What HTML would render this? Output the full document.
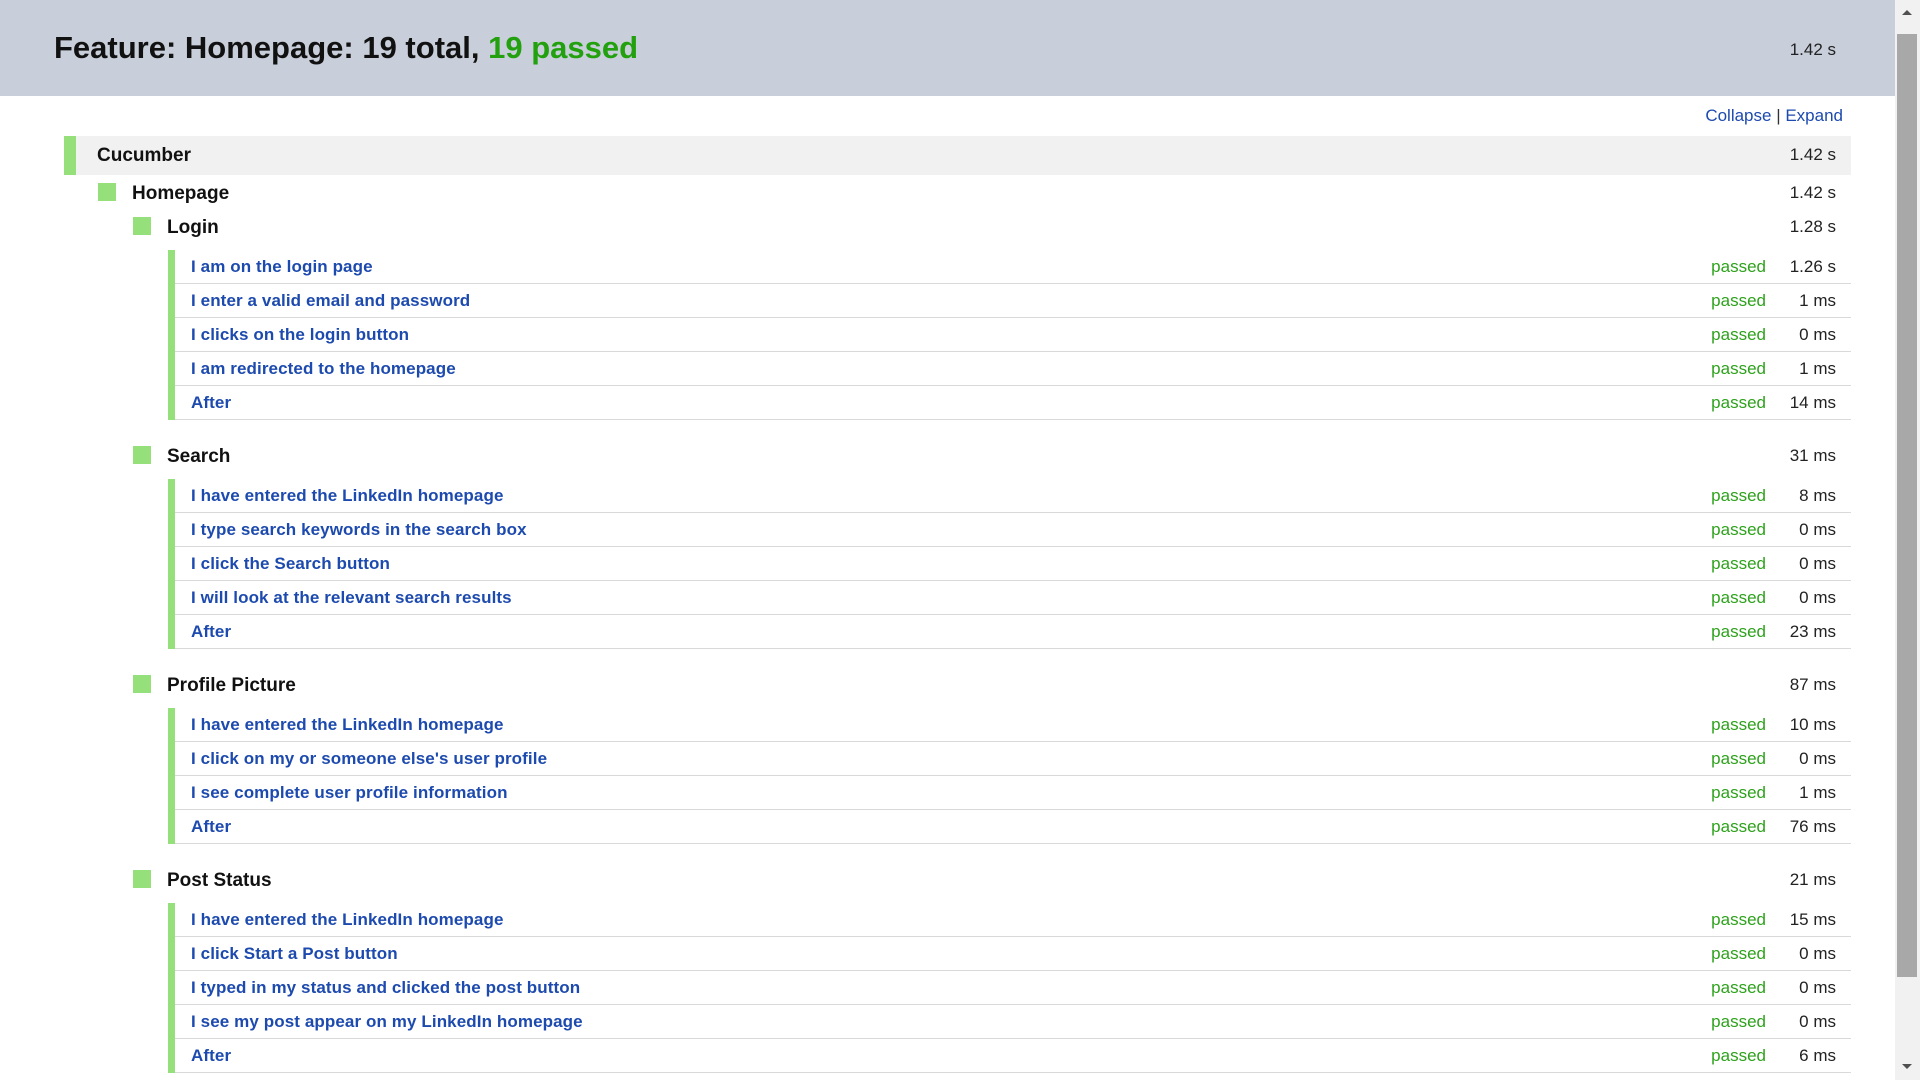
<!DOCTYPE html>
<html><head><meta charset="utf-8">
<style>
*{margin:0;padding:0;box-sizing:border-box}
body{width:1920px;height:1080px;overflow:hidden;background:#fff;font-family:"Liberation Sans",Arial,sans-serif;position:relative}
.hdr{position:absolute;left:0;top:0;width:1895px;height:96px;background:#c8ceda}
.hdr h1{position:absolute;left:54px;top:30px;font-size:31px;font-weight:bold;color:#111;white-space:nowrap}
.hdr h1 span{color:#22a00e}
.hdr .t{position:absolute;right:59px;top:40px;font-size:17px;color:#222}
.links{position:absolute;right:77px;top:106px;font-size:17px;color:#1d4aae}
.links i{font-style:normal;color:#333}
.wrap{position:absolute;left:64px;top:136px;width:1787px}
.cuc{height:39px;background:#f1f1f1;border-left:12px solid #95e07a;position:relative}
.cuc b{position:absolute;left:21px;top:9px;font-size:19px;color:#111}
.tm{position:absolute;right:15px;font-size:17px;color:#222}
.cuc .tm{top:9px}
.row{height:34px;position:relative}
.sq{position:absolute;width:18px;height:18px;background:#95e07a;top:8px}
.row b{position:absolute;top:8px;font-size:19px;color:#111}
.row .tm{top:8px}
.feat .sq{left:34px}.feat b{left:68px}
.sc{margin-top:18px}
.sc .sq{left:69px}.sc b{left:103px}
.steps{margin-left:104px;margin-top:7px;border-left:7px solid #95e07a}
.st{height:34px;border-bottom:1px solid #d9d9d9;position:relative}
.st a{position:absolute;left:16px;top:7px;font-size:17px;font-weight:bold;color:#1d4aae;text-decoration:none;letter-spacing:.1px}
.st .p{position:absolute;right:85px;top:7px;font-size:17px;color:#2ea21c}
.st .tm{top:7px}
.sb{position:absolute;left:1895px;top:0;width:25px;height:1080px;background:#f1f1f1}
.th{position:absolute;left:2px;top:34px;width:20px;height:943px;background:#a8a8a8}
.ar{position:absolute;left:7px;width:0;height:0;border-left:5px solid transparent;border-right:5px solid transparent}
</style></head><body>
<div class="hdr"><h1>Feature: Homepage: 19 total, <span>19 passed</span></h1><div class="t">1.42 s</div></div>
<div class="links">Collapse <i>|</i> Expand</div>
<div class="wrap">
<div class="cuc"><b>Cucumber</b><span class="tm">1.42 s</span></div>
<div class="row feat"><div class="sq"></div><b>Homepage</b><span class="tm">1.42 s</span></div>

<div class="row sc" style="margin-top:0"><div class="sq"></div><b>Login</b><span class="tm">1.28 s</span></div>
<div class="steps">
<div class="st"><a>I am on the login page</a><span class="p">passed</span><span class="tm">1.26 s</span></div>
<div class="st"><a>I enter a valid email and password</a><span class="p">passed</span><span class="tm">1 ms</span></div>
<div class="st"><a>I clicks on the login button</a><span class="p">passed</span><span class="tm">0 ms</span></div>
<div class="st"><a>I am redirected to the homepage</a><span class="p">passed</span><span class="tm">1 ms</span></div>
<div class="st"><a>After</a><span class="p">passed</span><span class="tm">14 ms</span></div>
</div>

<div class="row sc"><div class="sq"></div><b>Search</b><span class="tm">31 ms</span></div>
<div class="steps">
<div class="st"><a>I have entered the LinkedIn homepage</a><span class="p">passed</span><span class="tm">8 ms</span></div>
<div class="st"><a>I type search keywords in the search box</a><span class="p">passed</span><span class="tm">0 ms</span></div>
<div class="st"><a>I click the Search button</a><span class="p">passed</span><span class="tm">0 ms</span></div>
<div class="st"><a>I will look at the relevant search results</a><span class="p">passed</span><span class="tm">0 ms</span></div>
<div class="st"><a>After</a><span class="p">passed</span><span class="tm">23 ms</span></div>
</div>

<div class="row sc"><div class="sq"></div><b>Profile Picture</b><span class="tm">87 ms</span></div>
<div class="steps">
<div class="st"><a>I have entered the LinkedIn homepage</a><span class="p">passed</span><span class="tm">10 ms</span></div>
<div class="st"><a>I click on my or someone else's user profile</a><span class="p">passed</span><span class="tm">0 ms</span></div>
<div class="st"><a>I see complete user profile information</a><span class="p">passed</span><span class="tm">1 ms</span></div>
<div class="st"><a>After</a><span class="p">passed</span><span class="tm">76 ms</span></div>
</div>

<div class="row sc"><div class="sq"></div><b>Post Status</b><span class="tm">21 ms</span></div>
<div class="steps">
<div class="st"><a>I have entered the LinkedIn homepage</a><span class="p">passed</span><span class="tm">15 ms</span></div>
<div class="st"><a>I click Start a Post button</a><span class="p">passed</span><span class="tm">0 ms</span></div>
<div class="st"><a>I typed in my status and clicked the post button</a><span class="p">passed</span><span class="tm">0 ms</span></div>
<div class="st"><a>I see my post appear on my LinkedIn homepage</a><span class="p">passed</span><span class="tm">0 ms</span></div>
<div class="st"><a>After</a><span class="p">passed</span><span class="tm">6 ms</span></div>
</div>
</div>
<div class="sb"><div class="ar" style="top:10px;border-bottom:5px solid #505050"></div><div class="th"></div><div class="ar" style="top:1064px;border-top:5px solid #505050"></div></div>
</body></html>
